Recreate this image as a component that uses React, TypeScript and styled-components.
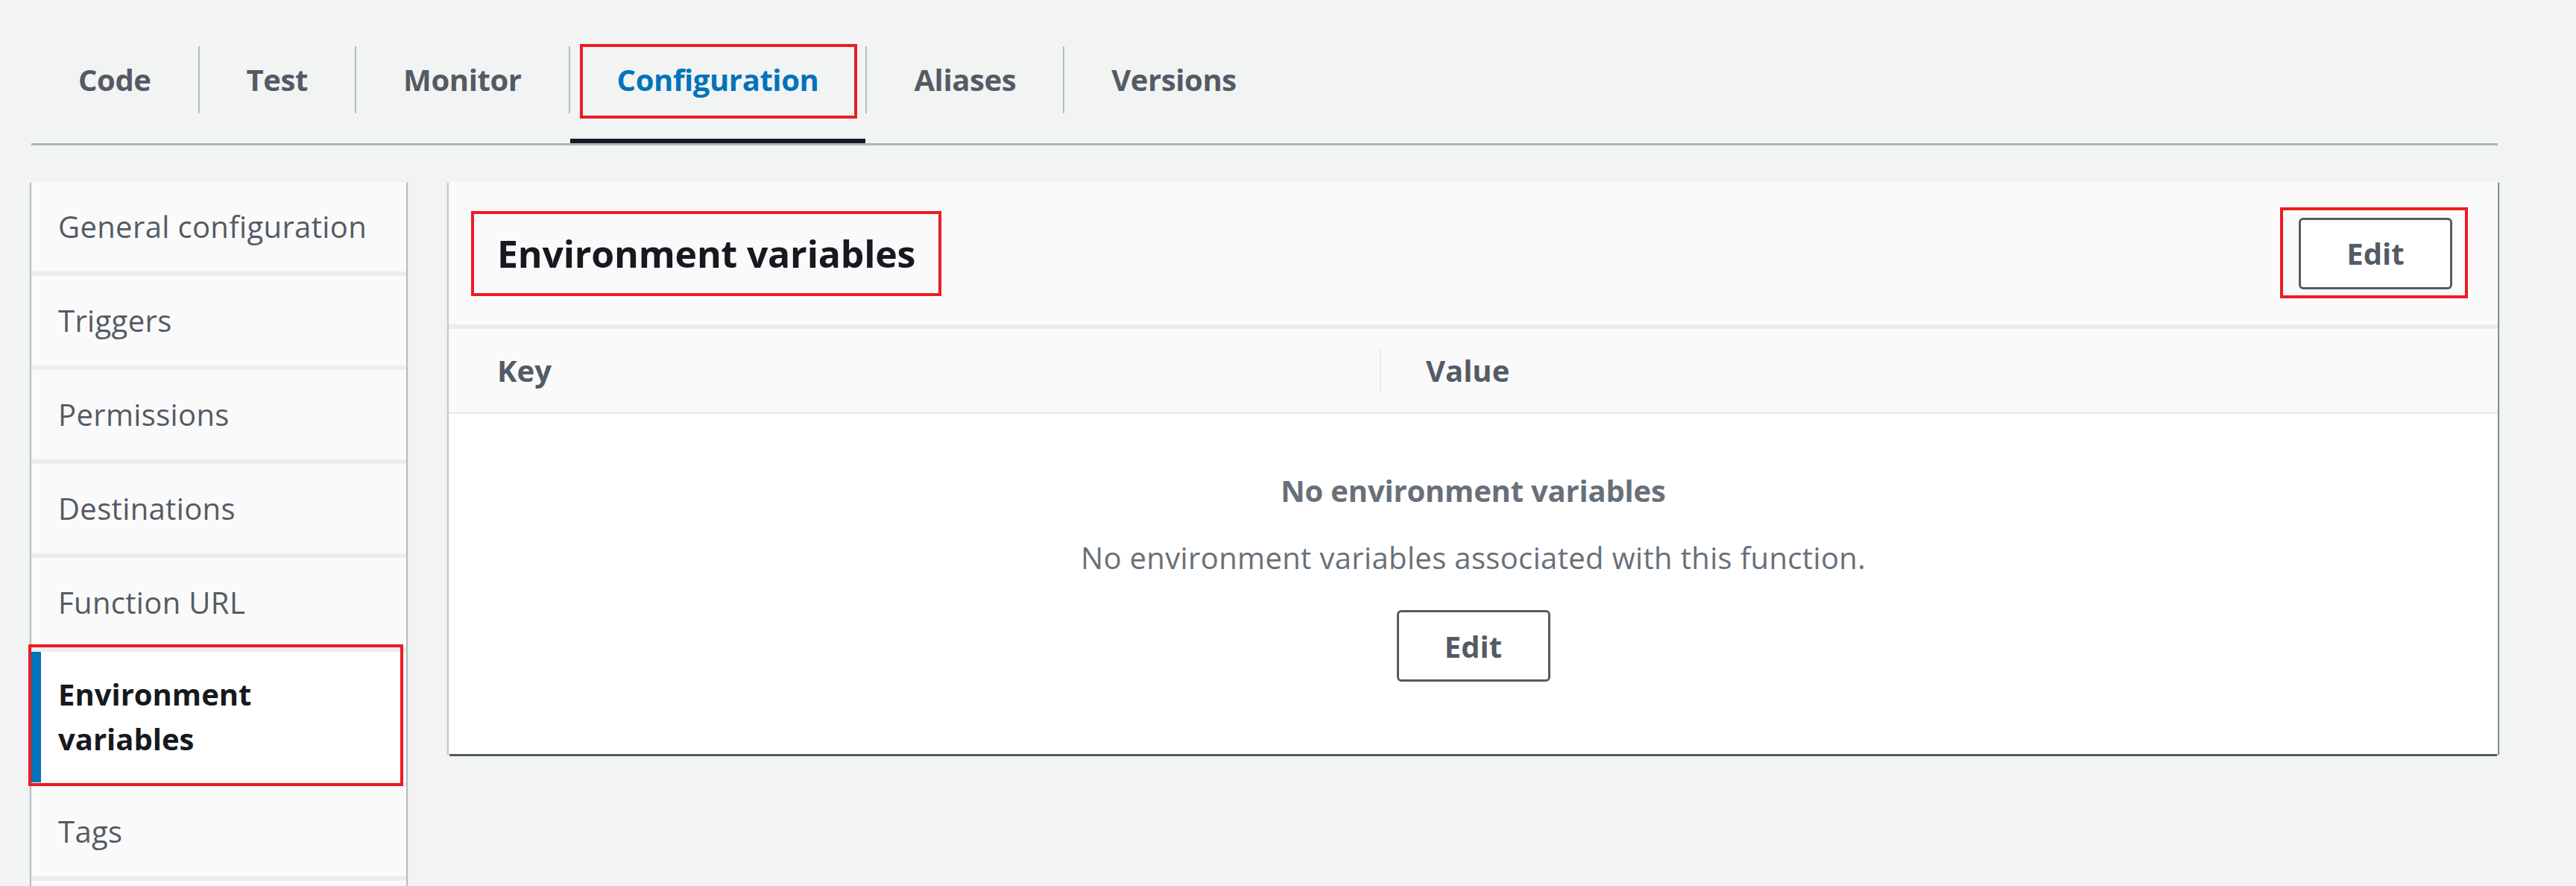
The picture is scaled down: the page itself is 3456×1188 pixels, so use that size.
import styled, { createGlobalStyle, css } from 'styled-components';

const GlobalStyle = createGlobalStyle`
  html, body {
    margin: 0;
    padding: 0;
    background: #f2f3f3;
    overflow: hidden;
  }
  body {
    font-family: 'Open Sans', 'Noto Sans', sans-serif;
    color: #16191f;
  }
  * { box-sizing: border-box; }
`;

const tabs = ['Code', 'Test', 'Monitor', 'Configuration', 'Aliases', 'Versions'];
const activeTab = 'Configuration';

const navItems = [
    'General configuration',
    'Triggers',
    'Permissions',
    'Destinations',
    'Function URL',
    'Environment variables',
    'Tags',
];
const activeNav = 'Environment variables';

// red annotation frame drawn over a part of the screenshot
const redBox = (inset: string) => css`
  position: relative;
  &::after {
    content: '';
    position: absolute;
    inset: ${inset};
    border: 4px solid #ec1c24;
    pointer-events: none;
  }
`;

export default function App() {
    return (
        <>
            <GlobalStyle />
            <Page>
                <TabBar>
                    {tabs.map((tab, i) => (
                        <TabGroup key={tab}>
                            {i > 0 && <TabDivider />}
                            <Tab $active={tab === activeTab} $marked={tab === activeTab}>
                                {tab}
                            </Tab>
                        </TabGroup>
                    ))}
                </TabBar>

                <Body>
                    <SideNav>
                        {navItems.map((item) => (
                            <NavItem key={item} $active={item === activeNav} $marked={item === activeNav}>
                                {item === activeNav ? (
                                    <>
                                        Environment
                                        <br />
                                        variables
                                    </>
                                ) : (
                                    item
                                )}
                            </NavItem>
                        ))}
                    </SideNav>

                    <Panel>
                        <PanelHeader>
                            <Heading>Environment variables</Heading>
                            <Button $marked>Edit</Button>
                        </PanelHeader>
                        <TableHead>
                            <KeyCell>Key</KeyCell>
                            <ColDivider />
                            <ValueCell>Value</ValueCell>
                        </TableHead>
                        <Empty>
                            <EmptyTitle>No environment variables</EmptyTitle>
                            <EmptyText>No environment variables associated with this function.</EmptyText>
                            <Button>Edit</Button>
                        </Empty>
                    </Panel>
                </Body>
            </Page>
        </>
    );
}

const Page = styled.div`
  padding: 22px 0 0 42px;
  width: 3351px;
`;

const TabBar = styled.div`
  display: flex;
  align-items: center;
  height: 173px;
  border-bottom: 3px solid #aab7b8;
`;

const TabGroup = styled.div`
  display: flex;
  align-items: center;
  height: 100%;
`;

const TabDivider = styled.div`
  width: 2px;
  height: 90px;
  background: #b6bec0;
`;

const Tab = styled.div<{ $active?: boolean; $marked?: boolean }>`
  display: flex;
  align-items: center;
  height: 100%;
  padding: 0 63px;
  font-size: 40px;
  font-weight: 700;
  letter-spacing: -0.4px;
  line-height: 54px;
  color: ${(p) => (p.$active ? '#0073bb' : '#545b64')};
  box-shadow: ${(p) => (p.$active ? 'inset 0 -6px 0 #16191f' : 'none')};
  ${(p) => p.$marked && redBox('37px 11px 33px 13px')}
`;

const Body = styled.div`
  display: flex;
  align-items: flex-start;
  gap: 57px;
  margin-top: 49px;
`;

const SideNav = styled.nav`
  width: 503px;
  flex-shrink: 0;
  display: flex;
  flex-direction: column;
  gap: 6px;
  background: #eaeded;
  box-shadow: -2px 1px 1px rgba(0, 28, 36, 0.25), 2px 1px 1px rgba(0, 28, 36, 0.25);

  &::after {
    content: '';
    height: 80px;
    background: #fafafa;
  }
`;

const NavItem = styled.div<{ $active?: boolean; $marked?: boolean }>`
  padding: ${(p) => (p.$active ? '27px 36px 28px 36px' : '30px 36px')};
  font-size: 40px;
  line-height: 60px;
  letter-spacing: ${(p) => (p.$active ? '0' : '0.35px')};
  font-weight: ${(p) => (p.$active ? 700 : 400)};
  color: ${(p) => (p.$active ? '#16191f' : '#545b64')};
  background: ${(p) => (p.$active ? '#ffffff' : '#fafafa')};
  box-shadow: ${(p) => (p.$active ? 'inset 13px 0 0 #0073bb' : 'none')};
  ${(p) => p.$marked && redBox('-10px 4px -5px -4px')}
`;

const Panel = styled.section`
  flex: 1;
  background: #ffffff;
  box-shadow: 0 4px 0 -1px #545b64, 2px 1px 1px rgba(0, 28, 36, 0.45), -2px 1px 1px rgba(0, 28, 36, 0.2);
`;

const PanelHeader = styled.div`
  display: flex;
  align-items: center;
  justify-content: space-between;
  height: 197px;
  padding: 0 61px 0 65px;
  background: #fafafa;
  border-bottom: 6px solid #eaeded;
`;

const Heading = styled.h2`
  display: inline-block;
  margin: 0;
  font-size: 50px;
  line-height: 60px;
  font-weight: 700;
  letter-spacing: -0.2px;
  color: #16191f;
  ${redBox('-27px -35px')}
`;

const Button = styled.button<{ $marked?: boolean }>`
  width: 206px;
  height: 96px;
  border: 3px solid #545b64;
  border-radius: 6px;
  background: #ffffff;
  font-family: inherit;
  font-size: 40px;
  font-weight: 700;
  color: #545b64;
  cursor: pointer;
  ${(p) => p.$marked && redBox('-17px -24px -15px -28px')}
`;

const TableHead = styled.div`
  display: flex;
  align-items: center;
  height: 114px;
  background: #fafafa;
  border-bottom: 3px solid #eaeded;
  font-size: 40px;
  font-weight: 700;
  color: #545b64;
`;

const KeyCell = styled.div`
  width: 1249px;
  padding-left: 65px;
`;

const ColDivider = styled.div`
  width: 2px;
  height: 59px;
  background: #eaeded;
`;

const ValueCell = styled.div`
  padding-left: 60px;
`;

const Empty = styled.div`
  display: flex;
  flex-direction: column;
  align-items: center;
  padding: 73px 0 97px;
  color: #687078;
  font-size: 40px;
  line-height: 60px;
`;

const EmptyTitle = styled.div`
  font-weight: 700;
  letter-spacing: -0.2px;
`;

const EmptyText = styled.div`
  margin: 30px 0 40px;
  letter-spacing: 0.35px;
`;
